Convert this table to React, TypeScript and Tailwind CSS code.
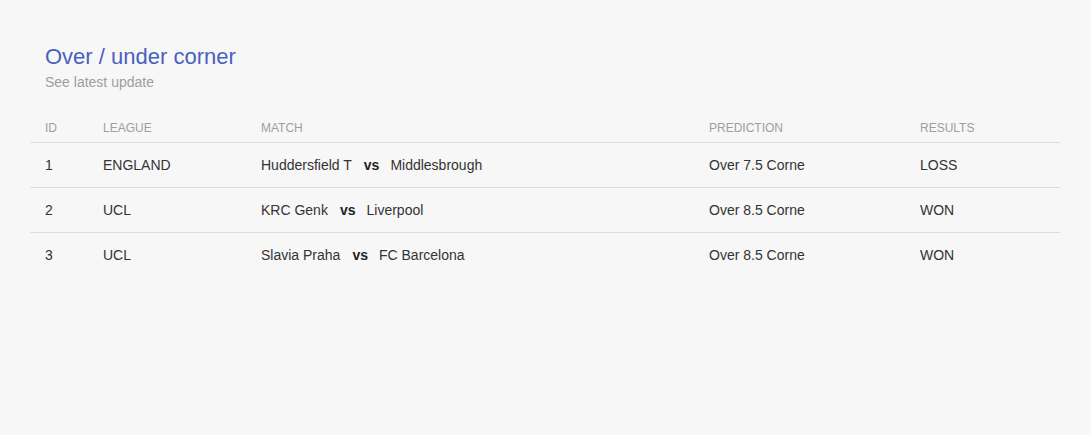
const rows = [
  { id: 1, league: "ENGLAND", home: "Huddersfield T", away: "Middlesbrough", prediction: "Over 7.5 Corne", result: "LOSS" },
  { id: 2, league: "UCL", home: "KRC Genk", away: "Liverpool", prediction: "Over 8.5 Corne", result: "WON" },
  { id: 3, league: "UCL", home: "Slavia Praha", away: "FC Barcelona", prediction: "Over 8.5 Corne", result: "WON" },
];

export default function App() {
  return (
    <div className="min-h-[435px] w-full bg-[#f7f7f7] px-[30px] pt-[43px] font-['Liberation_Sans',Arial,sans-serif]">
      <div className="px-[15px]">
        <h2 className="text-[22px] leading-[28px] text-[#4a5fc1]">Over / under corner</h2>
        <p className="mt-[1px] text-[14px] leading-[20px] text-[#9e9e9e]">See latest update</p>
      </div>

      <table className="mt-[27px] w-[1030px] border-collapse text-left">
        <thead>
          <tr className="border-b border-[#dddddd] text-[12px] text-[#9e9e9e]">
            <th className="w-[58px] px-[15px] pb-[5px] font-normal">ID</th>
            <th className="w-[158px] px-[15px] pb-[5px] font-normal">LEAGUE</th>
            <th className="w-[448px] px-[15px] pb-[5px] font-normal">MATCH</th>
            <th className="w-[211px] px-[15px] pb-[5px] font-normal">PREDICTION</th>
            <th className="px-[15px] pb-[5px] font-normal">RESULTS</th>
          </tr>
        </thead>
        <tbody className="text-[14px] text-[#333333]">
          {rows.map((r, i) => (
            <tr key={r.id} className={i < rows.length - 1 ? "h-[45px] border-b border-[#dddddd]" : "h-[45px]"}>
              <td className="px-[15px] pt-[1px]">{r.id}</td>
              <td className="px-[15px] pt-[1px]">{r.league}</td>
              <td className="px-[15px] pt-[1px]">
                {r.home}
                <span className="ml-[12px] mr-[11px] font-bold text-[#222]">vs</span>
                {r.away}
              </td>
              <td className="px-[15px] pt-[1px]">{r.prediction}</td>
              <td className="px-[15px] pt-[1px]">{r.result}</td>
            </tr>
          ))}
        </tbody>
      </table>
    </div>
  );
}
